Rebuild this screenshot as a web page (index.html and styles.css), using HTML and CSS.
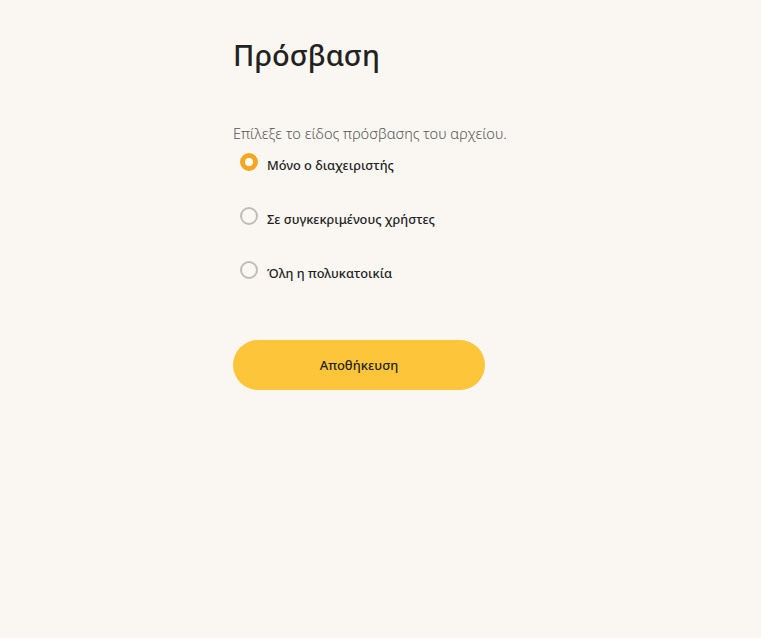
FILE: index.html
```html
<!DOCTYPE html>
<html lang="el">
<head>
    <meta charset="UTF-8">
    <meta name="viewport" content="width=device-width, initial-scale=1.0">
    <title>Πρόσβαση</title>
    <link rel="stylesheet" href="styles.css">
</head>
<body>
    <div class="container">
        <h1>Πρόσβαση</h1>
        <p class="hint">Επίλεξε το είδος πρόσβασης του αρχείου.</p>

        <form class="access-form">
            <label class="option">
                <input type="radio" name="access" value="admin" checked>
                <span class="dot"></span>
                <span class="option-text">Μόνο ο διαχειριστής</span>
            </label>
            <label class="option">
                <input type="radio" name="access" value="users">
                <span class="dot"></span>
                <span class="option-text">Σε συγκεκριμένους χρήστες</span>
            </label>
            <label class="option">
                <input type="radio" name="access" value="all">
                <span class="dot"></span>
                <span class="option-text">Όλη η πολυκατοικία</span>
            </label>

            <button type="button" class="save-btn">Αποθήκευση</button>
        </form>
    </div>
</body>
</html>
```

FILE: styles.css
```css
/* page */
body {
    margin: 0;
    font-family: "Noto Sans", "Open Sans", sans-serif;
    background-color: #faf7f3;
    color: #1f1f1f;
}

.container {
    width: 295px;
    margin: 0 auto;
    padding: 34px 0 0 0;
}

h1 {
    margin: 0;
    font-size: 29px;
    font-weight: 500;
    line-height: 42px;
    color: #222;
}

.hint {
    margin: 47px 0 0 0;
    font-size: 14.6px;
    font-weight: 300;
    color: #555;
    line-height: 20px;
}

/* radio options */
.access-form {
    display: flex;
    flex-direction: column;
    margin-top: 10px;
}

.option {
    display: flex;
    align-items: center;
    height: 18px;
    margin-bottom: 36px;
    padding-left: 7px;
    cursor: pointer;
}

.option input {
    display: none;
}

.dot {
    width: 14px;
    height: 14px;
    border: 2px solid #bdbdbd;
    border-radius: 50%;
    flex-shrink: 0;
}

.option input:checked + .dot {
    width: 8px;
    height: 8px;
    border: 5px solid #f5a623;
    background: #fff;
}

.option-text {
    margin-left: 9px;
    font-size: 12.8px;
    font-weight: 500;
    color: #1f1f1f;
    position: relative;
    top: 3px;
}

.save-btn {
    margin-top: 25px;
    width: 252px;
    height: 50px;
    border: none;
    border-radius: 25px;
    background: #fdc53a;
    font-family: inherit;
    font-size: 13px;
    font-weight: 500;
    color: #1f1f1f;
    cursor: pointer;
}
```
